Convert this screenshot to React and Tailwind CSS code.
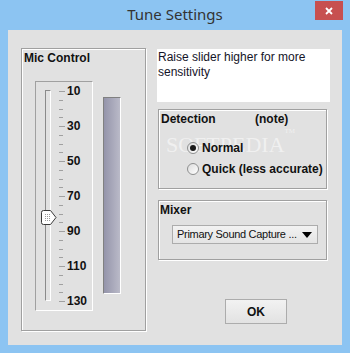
import React from "react";

const F = "font-['Liberation_Sans',Arial,sans-serif]";

function Slider() {
  const ticks = Array.from({ length: 25 }, (_, i) => i);
  const labels = [10, 30, 50, 70, 90, 110, 130];
  return (
    <div className="relative w-[58px] h-[230px] border border-t-[#a0a0a0] border-l-[#a0a0a0] border-r-white border-b-white">
      <div className="absolute left-[9px] top-[8px] w-[6px] h-[211px] border border-t-[#8a8a8a] border-l-[#8a8a8a] border-r-white border-b-white" />
      <svg className="absolute left-[23px] top-0" width="7" height="228">
        {ticks.map((i) => {
          const y = Math.round(9 + i * 8.75) + 0.5;
          const major = i % 4 === 0;
          return <line key={i} x1="0" x2={major ? 6 : 4} y1={y} y2={y} stroke="#a0a0a0" strokeWidth="1" />;
        })}
      </svg>
      {labels.map((l, i) => (
        <div
          key={l}
          className="absolute left-[31px] text-[12px] leading-[14px] font-bold text-[#111]"
          style={{ top: Math.round(9 + i * 35) - 7 }}
        >
          {l}
        </div>
      ))}
      <svg className="absolute left-[5px] top-[128px]" width="16" height="16" viewBox="0 0 16 16">
        <defs>
          <pattern id="dots" width="2" height="2" patternUnits="userSpaceOnUse">
            <rect width="2" height="2" fill="#fff" />
            <rect width="1" height="1" fill="#9a9a9a" />
          </pattern>
        </defs>
        <path d="M2.5 0.5 H9.5 L15 7.5 L9.5 14.5 H2.5 Q0.5 14.5 0.5 12.5 V2.5 Q0.5 0.5 2.5 0.5 Z" fill="#fff" stroke="#3a3a3a" />
        <rect x="3" y="3" width="6" height="9" fill="url(#dots)" />
      </svg>
    </div>
  );
}

function Radio({ checked, label }) {
  return (
    <div className="flex items-center h-[14px]">
      <div className="w-[12px] h-[12px] rounded-full border border-[#8e8f8f] bg-[linear-gradient(135deg,#dcdcdc,#ffffff)] flex items-center justify-center">
        {checked && <div className="w-[6px] h-[6px] rounded-full bg-[#1a1a1a]" />}
      </div>
      <span className="ml-[3px] text-[12px] font-bold text-[#111]">{label}</span>
    </div>
  );
}

export default function App() {
  return (
    <div className={`w-[350px] h-[353px] bg-[#8cc4f2] flex flex-col ${F}`}>
      <div className="h-[30px] grid grid-cols-[1fr_auto_1fr] items-start">
        <div />
        <div className="pt-[4px] text-[15px] leading-[20px] text-[#333] font-['Noto_Sans',sans-serif]">Tune Settings</div>
        <div className="flex justify-end pr-[7px] pt-[1px]">
          <div className="w-[28px] h-[19px] bg-[#c75050] flex items-center justify-center">
            <svg width="8" height="8" viewBox="0 0 8 8">
              <path d="M1 1 L7 7 M7 1 L1 7" stroke="#fff" strokeWidth="1.8" />
            </svg>
          </div>
        </div>
      </div>
      <div className="mx-[8px] h-[315px] bg-[#e1e1e1] pl-[13px] pt-[18px] flex items-start">
        {/* Mic Control group */}
        <div className="w-[125px] h-[283px] border border-[#a0a0a0] shadow-[inset_1px_1px_0_#fff,1px_1px_0_#fff] flex flex-col">
          <div className="pl-[2px] pt-[2px] text-[12px] leading-[14px] font-bold text-[#111]">Mic Control</div>
          <div className="flex items-start pl-[13px] mt-[16px]">
            <Slider />
            <div className="ml-[10px] mt-[16px] w-[18px] h-[197px] border border-t-[#808080] border-l-[#808080] border-r-white border-b-white bg-[linear-gradient(to_right,#9494aa,#babac8)]" />
          </div>
        </div>
        {/* Right column */}
        <div className="ml-[11px] flex flex-col">
          <div className="mt-[1px] w-[173px] h-[53px] bg-white pl-[1px] pt-[1px] text-[12px] leading-[15px] text-[#141428]">
            Raise slider higher for more sensitivity
          </div>
          <div className="relative ml-[1px] mt-[7px] w-[169px] h-[80px] border border-[#a0a0a0] shadow-[inset_1px_1px_0_#fff,1px_1px_0_#fff] flex flex-col">
            <div className="absolute left-[7px] top-[24px] text-[22px] leading-[22px] text-white/50 font-['Liberation_Serif',serif] select-none pointer-events-none">
              SOFTPEDIA<sup className="text-[7px] align-top">TM</sup>
            </div>
            <div className="relative flex pl-[2px] pt-[2px] text-[12px] leading-[14px] font-bold text-[#111]">
              <span className="w-[94px]">Detection</span>
              <span>(note)</span>
            </div>
            <div className="relative pl-[28px] mt-[15px] flex flex-col gap-[7px]">
              <Radio checked label="Normal" />
              <Radio label="Quick (less accurate)" />
            </div>
          </div>
          <div className="ml-[1px] mt-[11px] w-[169px] h-[60px] border border-[#a0a0a0] shadow-[inset_1px_1px_0_#fff,1px_1px_0_#fff] flex flex-col">
            <div className="pl-[1px] pt-[2px] text-[12px] leading-[14px] font-bold text-[#111]">Mixer</div>
            <div className="ml-[13px] mt-[8px] w-[146px] h-[19px] border border-[#acacac] bg-[linear-gradient(#f2f2f2,#e4e4e4)] flex items-center justify-between pl-[4px] pr-[5px]">
              <span className="whitespace-nowrap text-[11px] leading-[13px] tracking-[-0.3px] text-[#111]">Primary Sound Capture ...</span>
              <svg width="10" height="6" viewBox="0 0 10 6">
                <path d="M0 0 H10 L5 6 Z" fill="#000" />
              </svg>
            </div>
          </div>
          <div className="ml-[68px] mt-[39px] w-[62px] h-[25px] border border-[#acacac] bg-[linear-gradient(#f2f2f2,#e2e2e2)] flex items-center justify-center text-[12px] font-bold text-[#111]">
            OK
          </div>
        </div>
      </div>
    </div>
  );
}
